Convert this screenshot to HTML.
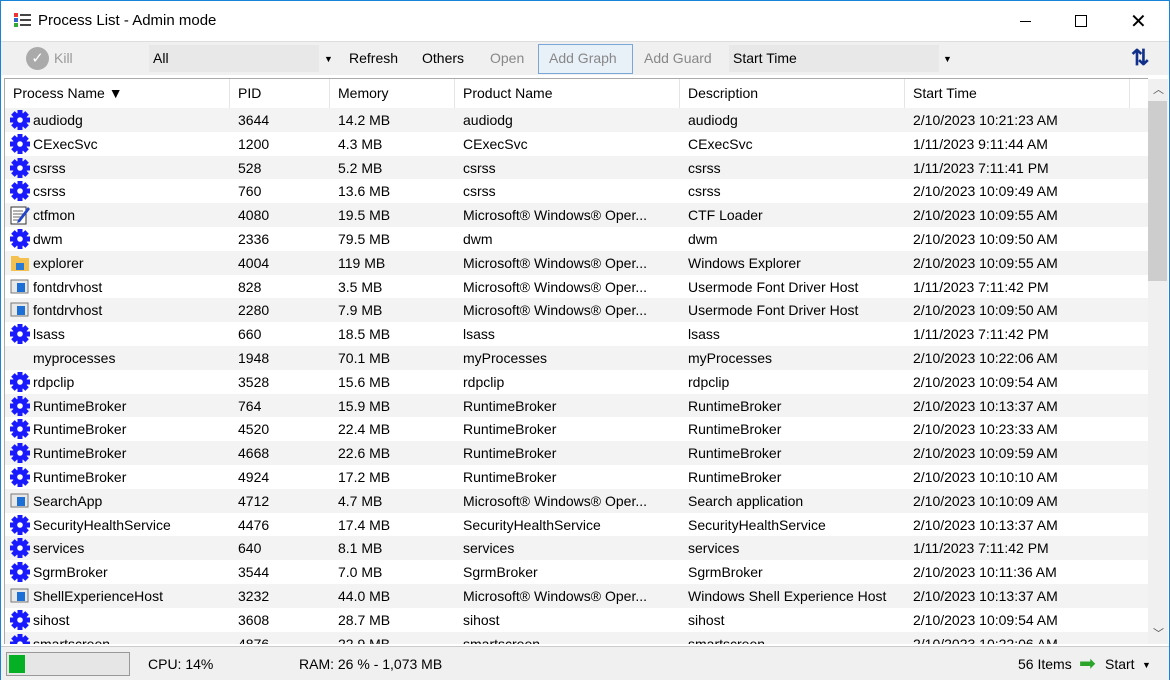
<!DOCTYPE html><html><head><meta charset="utf-8"><style>
*{margin:0;padding:0;box-sizing:border-box}
body{width:1170px;height:680px;overflow:hidden;font-family:"Liberation Sans",sans-serif;font-size:14px;color:#000;background:#fff;position:relative}
.win{position:absolute;inset:0;border:1px solid #1883d7}
.title{position:absolute;left:0;top:0;width:1168px;height:40px;background:#fff}
.title span{position:absolute;left:37px;top:11px;font-size:15px}
.tb{position:absolute;left:0;top:40px;width:1168px;height:34px;background:#f0f0f0;border-top:1px solid #ddd}
.tb .t{position:absolute;top:8px;font-size:14px}
.combo{position:absolute;top:3px;height:27px;background:#e8e8e8}
.list{position:absolute;left:3px;top:77px;width:1144px;height:566px;overflow:hidden;background:#fff;border-left:1px solid #aaa;border-top:1px solid #aaa}
.hdr{position:absolute;top:0;left:0;height:29px;width:1144px;background:#fff}
.hdr div{position:absolute;top:0;height:29px;border-right:1px solid #e5e5e5;padding:6px 0 0 8px;font-size:14px}
.row{position:absolute;left:0;width:1144px;height:23.8px}
.row.g{background:#f3f3f3}
.row div{position:absolute;top:4px;white-space:nowrap;font-size:14px}
.row svg{position:absolute;left:5px;top:2px}
.sb{position:absolute;left:1147px;top:78px;width:20px;height:565px;background:#f0f0f0}
.status{position:absolute;left:0;top:645px;width:1168px;height:34px;background:#f0f0f0;border-top:1px solid #ccc}
.status .t{position:absolute;top:9px;font-size:14px}
</style></head><body>
<svg width="0" height="0" style="position:absolute"><defs>
<symbol id="gear" viewBox="0 0 20 20"><g fill="#1a1aff"><rect x="7.5" y="0" width="5" height="20"/><rect x="7.5" y="0" width="5" height="20" transform="rotate(45 10 10)"/><rect x="7.5" y="0" width="5" height="20" transform="rotate(90 10 10)"/><rect x="7.5" y="0" width="5" height="20" transform="rotate(135 10 10)"/><circle cx="10" cy="10" r="7.3"/></g><circle cx="10" cy="10" r="2.8" fill="#fff"/></symbol>
<symbol id="win" viewBox="0 0 20 20"><rect x="1" y="3" width="17" height="13" fill="#e8e8e8" stroke="#777"/><rect x="7" y="6" width="8" height="9" fill="#1d6fd8"/></symbol>
<symbol id="fold" viewBox="0 0 20 20"><path d="M1 3h7l2 2h9v13H1z" fill="#f4c150"/><rect x="6" y="10" width="8" height="7" fill="#2a7ad8"/></symbol>
<symbol id="pen" viewBox="0 0 20 20"><rect x="1" y="2" width="15" height="17" fill="#fff" stroke="#333"/><path d="M3 6h10M3 9h10M3 12h10M3 15h8" stroke="#666"/><path d="M8 15l10-13 2 2-10 13-3 1z" fill="#2345c8"/></symbol>
</defs></svg>
<div class="win">
<div class="title">
<div style="position:absolute;left:13px;top:12px;width:4px;height:4px;background:#e33"></div>
<div style="position:absolute;left:13px;top:17px;width:4px;height:4px;background:#36c"></div>
<div style="position:absolute;left:13px;top:22px;width:4px;height:4px;background:#3a3"></div>
<div style="position:absolute;left:19px;top:13px;width:11px;height:2px;background:#444"></div>
<div style="position:absolute;left:19px;top:18px;width:11px;height:2px;background:#444"></div>
<div style="position:absolute;left:19px;top:23px;width:11px;height:2px;background:#444"></div>
<span>Process List - Admin mode</span>
<div style="position:absolute;left:1019px;top:20px;width:11px;height:1px;background:#000"></div>
<div style="position:absolute;left:1074px;top:14px;width:12px;height:12px;border:1px solid #000"></div>
<div style="position:absolute;left:1129px;top:8px;font-size:20px;font-weight:300">✕</div>
</div>
<div class="tb">
<div style="position:absolute;left:25px;top:5px;width:23px;height:23px;border-radius:50%;background:#aaa;color:#fff;text-align:center;font-size:15px;line-height:23px">✓</div>
<div class="t" style="left:53px;color:#999">Kill</div>
<div class="combo" style="left:148px;width:170px"></div><div class="t" style="left:152px">All</div><div class="t" style="left:323px;font-size:9px;top:12px">▼</div>
<div class="t" style="left:348px">Refresh</div>
<div class="t" style="left:421px">Others</div>
<div class="t" style="left:489px;color:#888">Open</div>
<div style="position:absolute;left:537px;top:2px;width:95px;height:30px;border:1px solid #7aa7d8;background:#e8f0f8"></div>
<div class="t" style="left:548px;color:#888">Add Graph</div>
<div class="t" style="left:643px;color:#888">Add Guard</div>
<div class="combo" style="left:728px;width:210px"></div><div class="t" style="left:732px">Start Time</div><div class="t" style="left:942px;font-size:9px;top:12px">▼</div>
<div class="t" style="left:1130px;top:3px;font-size:22px;color:#10308a;font-weight:bold">⇅</div>
</div>
<div class="list">
<div class="hdr">
<div style="left:0;width:225px">Process Name ▼</div>
<div style="left:225px;width:100px">PID</div>
<div style="left:325px;width:125px">Memory</div>
<div style="left:450px;width:225px">Product Name</div>
<div style="left:675px;width:225px">Description</div>
<div style="left:900px;width:225px">Start Time</div>
</div>
<div id="rows"></div>
</div>
<div class="sb"><div style="position:absolute;left:0;top:22px;width:19px;height:180px;background:#cdcdcd"></div><div style="position:absolute;left:5px;top:2px;font-size:11px;color:#555">︿</div><div style="position:absolute;left:5px;top:546px;font-size:11px;color:#555">﹀</div></div>
<div class="status">
<div style="position:absolute;left:5px;top:5px;width:124px;height:24px;border:1px solid #999;background:#e6e6e6"><div style="position:absolute;left:2px;top:2px;width:16px;height:18px;background:#06b025"></div></div>
<div class="t" style="left:147px">CPU: 14%</div>
<div class="t" style="left:298px">RAM: 26 % - 1,073 MB</div>
<div class="t" style="left:1017px">56 Items</div>
<div class="t" style="left:1078px;top:4px;color:#2aa52a;font-size:20px">➡</div>
<div class="t" style="left:1104px">Start</div><div class="t" style="left:1141px;font-size:9px;top:13px">▼</div>
</div>
</div>
<script>
var d=[["gear","audiodg",3644,"14.2 MB","audiodg","audiodg","2/10/2023 10:21:23 AM"],
["gear","CExecSvc",1200,"4.3 MB","CExecSvc","CExecSvc","1/11/2023 9:11:44 AM"],
["gear","csrss",528,"5.2 MB","csrss","csrss","1/11/2023 7:11:41 PM"],
["gear","csrss",760,"13.6 MB","csrss","csrss","2/10/2023 10:09:49 AM"],
["pen","ctfmon",4080,"19.5 MB","Microsoft® Windows® Oper...","CTF Loader","2/10/2023 10:09:55 AM"],
["gear","dwm",2336,"79.5 MB","dwm","dwm","2/10/2023 10:09:50 AM"],
["fold","explorer",4004,"119 MB","Microsoft® Windows® Oper...","Windows Explorer","2/10/2023 10:09:55 AM"],
["win","fontdrvhost",828,"3.5 MB","Microsoft® Windows® Oper...","Usermode Font Driver Host","1/11/2023 7:11:42 PM"],
["win","fontdrvhost",2280,"7.9 MB","Microsoft® Windows® Oper...","Usermode Font Driver Host","2/10/2023 10:09:50 AM"],
["gear","lsass",660,"18.5 MB","lsass","lsass","1/11/2023 7:11:42 PM"],
["","myprocesses",1948,"70.1 MB","myProcesses","myProcesses","2/10/2023 10:22:06 AM"],
["gear","rdpclip",3528,"15.6 MB","rdpclip","rdpclip","2/10/2023 10:09:54 AM"],
["gear","RuntimeBroker",764,"15.9 MB","RuntimeBroker","RuntimeBroker","2/10/2023 10:13:37 AM"],
["gear","RuntimeBroker",4520,"22.4 MB","RuntimeBroker","RuntimeBroker","2/10/2023 10:23:33 AM"],
["gear","RuntimeBroker",4668,"22.6 MB","RuntimeBroker","RuntimeBroker","2/10/2023 10:09:59 AM"],
["gear","RuntimeBroker",4924,"17.2 MB","RuntimeBroker","RuntimeBroker","2/10/2023 10:10:10 AM"],
["win","SearchApp",4712,"4.7 MB","Microsoft® Windows® Oper...","Search application","2/10/2023 10:10:09 AM"],
["gear","SecurityHealthService",4476,"17.4 MB","SecurityHealthService","SecurityHealthService","2/10/2023 10:13:37 AM"],
["gear","services",640,"8.1 MB","services","services","1/11/2023 7:11:42 PM"],
["gear","SgrmBroker",3544,"7.0 MB","SgrmBroker","SgrmBroker","2/10/2023 10:11:36 AM"],
["win","ShellExperienceHost",3232,"44.0 MB","Microsoft® Windows® Oper...","Windows Shell Experience Host","2/10/2023 10:13:37 AM"],
["gear","sihost",3608,"28.7 MB","sihost","sihost","2/10/2023 10:09:54 AM"],
["gear","smartscreen",4876,"22.9 MB","smartscreen","smartscreen","2/10/2023 10:22:06 AM"]];
var h="",x=[28,233,333,458,683,908];
d.forEach(function(r,i){h+='<div class="row'+(i%2?'':' g')+'" style="top:'+(29+i*23.8)+'px">'+(r[0]?'<svg width="20" height="20"><use href="#'+r[0]+'"/></svg>':'');
for(var k=0;k<6;k++)h+='<div style="left:'+x[k]+'px">'+r[k+1]+'</div>';h+='</div>';});
document.getElementById("rows").innerHTML=h;
</script>
</body></html>
